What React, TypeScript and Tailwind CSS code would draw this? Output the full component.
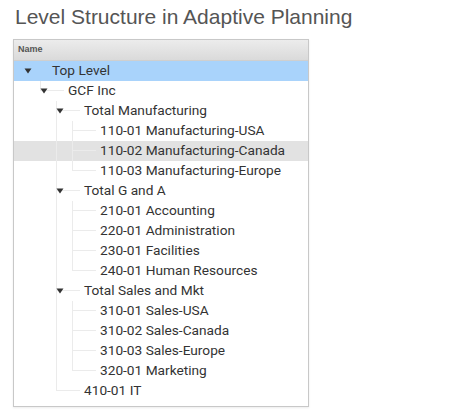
import React from 'react';

interface TreeNode {
  label: string;
  tone?: 'selected' | 'hover';
  children?: TreeNode[];
}

interface FlatRow {
  node: TreeNode;
  depth: number;
  last: boolean;
  // one flag per ancestor level: does that branch keep going below this row
  trail: boolean[];
}

const leaf = (label: string, tone?: TreeNode['tone']): TreeNode => ({ label, tone });

const tree: TreeNode = {
  label: 'Top Level',
  tone: 'selected',
  children: [
    {
      label: 'GCF Inc',
      children: [
        {
          label: 'Total Manufacturing',
          children: [
            leaf('110-01 Manufacturing-USA'),
            leaf('110-02 Manufacturing-Canada', 'hover'),
            leaf('110-03 Manufacturing-Europe'),
          ],
        },
        {
          label: 'Total G and A',
          children: [
            leaf('210-01 Accounting'),
            leaf('220-01 Administration'),
            leaf('230-01 Facilities'),
            leaf('240-01 Human Resources'),
          ],
        },
        {
          label: 'Total Sales and Mkt',
          children: [
            leaf('310-01 Sales-USA'),
            leaf('310-02 Sales-Canada'),
            leaf('310-03 Sales-Europe'),
            leaf('320-01 Marketing'),
          ],
        },
        leaf('410-01 IT'),
      ],
    },
  ],
};

function flatten(node: TreeNode, depth: number, last: boolean, trail: boolean[], out: FlatRow[]) {
  out.push({ node, depth, last, trail });
  const kids = node.children ?? [];
  kids.forEach((k, i) => flatten(k, depth + 1, i === kids.length - 1, [...trail, !last], out));
  return out;
}

const rows = flatten(tree, 0, true, [], []);

const Caret = () => (
  <svg width="8" height="6" viewBox="0 0 8 6" className="shrink-0">
    <path d="M0.5 0.5 L7.5 0.5 L4 5.5 Z" fill="#333" />
  </svg>
);

const TreeRow: React.FC<{ row: FlatRow }> = ({ row }) => {
  const { node, depth, last, trail } = row;
  const isFolder = !!node.children;
  const bg =
    node.tone === 'selected' ? 'bg-[#a9d3fb]' : node.tone === 'hover' ? 'bg-[#e2e2e2]' : 'bg-transparent';

  return (
    <div className={`h-5 flex items-stretch ${bg}`}>
      {/* guide lines of ancestors that still have siblings below */}
      {trail.map((on, i) => (
        <div key={i} className="w-4 shrink-0 flex">
          <div className={`ml-[10px] w-px ${on ? 'bg-[#ebebeb]' : ''}`} />
        </div>
      ))}
      {/* elbow joining this row to its parent */}
      <div className="w-[38px] shrink-0 grid grid-cols-[10px_1px_1fr] grid-rows-2">
        <div className="row-span-2" />
        {depth > 0 ? (
          <>
            <div className="bg-[#ebebeb]" />
            <div className="border-b border-[#ebebeb] mr-[4px]" />
            <div className={last ? '' : 'bg-[#ebebeb]'} />
            <div />
          </>
        ) : (
          <div className="row-span-2 col-span-2" />
        )}
      </div>
      <div className="flex items-center">
        {isFolder && (
          <span className="-ml-[28px] w-[28px] flex">
            <Caret />
          </span>
        )}
        <span className="text-[13.7px] leading-none text-[#333] whitespace-nowrap">{node.label}</span>
      </div>
    </div>
  );
};

export default function App() {
  return (
    <div className="w-[453px] h-[420px] bg-white overflow-hidden font-['Roboto','Liberation_Sans',sans-serif]">
      <h1 className="pl-[15px] pt-[3px] text-[21px] leading-[27px] text-[#555] font-['Liberation_Sans','Arial',sans-serif]">
        Level Structure in Adaptive Planning
      </h1>
      <div className="ml-[13px] mt-[9px] w-[296px] h-[368px] border border-[#c8c8c8] shadow-[0_1px_2px_rgba(0,0,0,0.08)]">
        <div className="h-[21px] flex items-center pl-[4px] bg-gradient-to-b from-[#ececec] to-[#dadada] border-b border-[#cfcfcf]">
          <span className="text-[9px] font-bold text-[#555] font-['Liberation_Sans',sans-serif]">Name</span>
        </div>
        <div className="flex flex-col">
          {rows.map((r) => (
            <TreeRow key={r.node.label} row={r} />
          ))}
        </div>
      </div>
    </div>
  );
}
